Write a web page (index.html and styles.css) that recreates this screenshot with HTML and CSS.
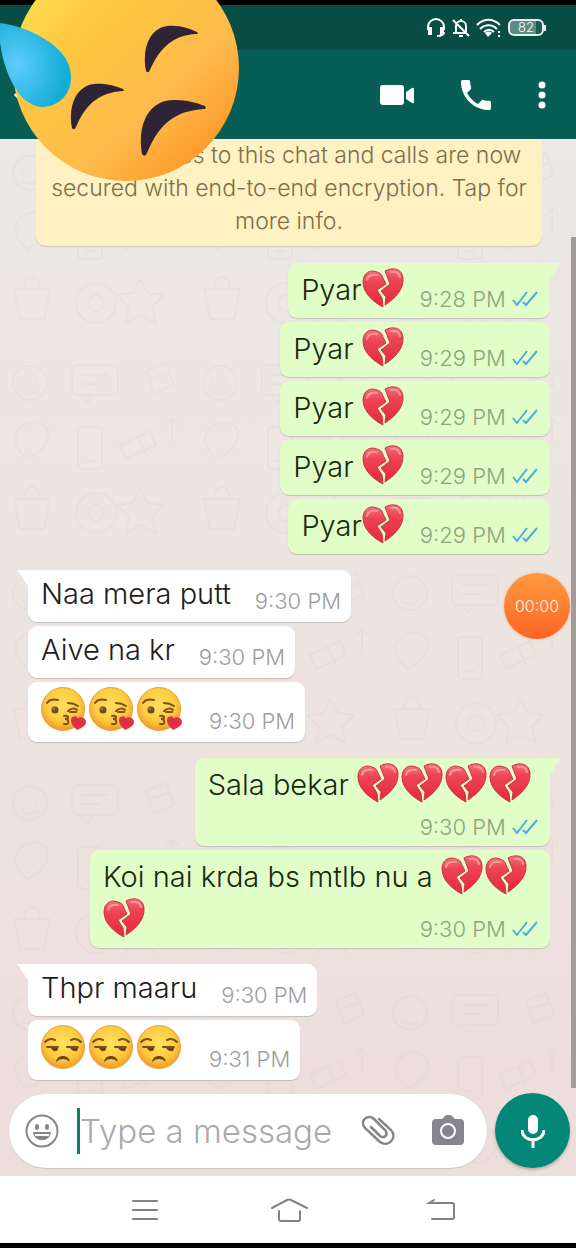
FILE: index.html
```html
<!DOCTYPE html>
<html lang="en">
<head>
  <meta charset="UTF-8" />
  <meta name="viewport" content="width=device-width, initial-scale=1.0" />
  <title>Chat</title>
  <link rel="stylesheet" href="styles.css">
</head>
<body>

  <!-- shared emoji and icons -->
  <svg class="sprite" width="0" height="0" aria-hidden="true">
    <defs>
      <linearGradient id="heartFill" x1="0" y1="0" x2="0" y2="1">
        <stop offset="0" stop-color="#f4717b" />
        <stop offset="0.3" stop-color="#ee4455" />
        <stop offset="1" stop-color="#e5283f" />
      </linearGradient>
      <radialGradient id="faceFill" cx="0.5" cy="0.4" r="0.6">
        <stop offset="0" stop-color="#ffe062" />
        <stop offset="0.65" stop-color="#fdca3d" />
        <stop offset="1" stop-color="#f0982b" />
      </radialGradient>
      <symbol id="broken-heart" viewBox="0 0 44 40">
        <g fill="url(#heartFill)" stroke="#cf3343" stroke-width="1" stroke-linejoin="round">
          <path d="M1 14C1 5 8 1 15 4c4 1 5 3 6 6l3 6-9 6 5 8 1 9C13 35 1 26 1 14z" />
          <path d="M23 3c7-4 17-3 18 7 1 12-9 21-18 27l1-8-5-6 9-7z" />
        </g>
        <path d="M5 12c1-5 6-6 10-5M29 4c5-1 8 1 9 5" fill="none" stroke="#f7969b" stroke-width="2" stroke-linecap="round" />
      </symbol>
      <symbol id="kiss" viewBox="0 0 48 46">
        <circle cx="22" cy="22" r="21.500" fill="url(#faceFill)" stroke="#eda035" />
        <g fill="none" stroke="#7b4f16" stroke-width="2" stroke-linecap="round">
          <path d="M6 16c2-3 6-4 11-3M27 16c4 0 7 1 10 3M27 24c3-3 7-3 9-1M29 25h6" />
          <path d="M23 29c3-1 5 1 4 2s-2 1-3 1c3 0 4 2 3 4s-3 1-4 1" />
        </g>
        <circle cx="14" cy="23" r="3.500" fill="#6d4a17" />
        <circle cx="13" cy="22" r="1" fill="#c9a04c" />
        <path d="M36 43c-3-3-6-6-6-10s5-5 7-2c3-2 8 0 8 4s-5 6-9 8z" fill="#e32f45" />
      </symbol>
      <symbol id="unamused" viewBox="0 0 48 46">
        <circle cx="22" cy="22" r="21.500" fill="url(#faceFill)" stroke="#eda035" />
        <path d="M10 22h7c1 6-7 5-7 0zM29 22h8c1 6-7 5-8 0z" fill="#66420f" />
        <g fill="none" stroke="#7b4f16" stroke-width="2" stroke-linecap="round">
          <path d="M4 17c3-3 6-4 10-2M30 15c4-2 7-1 10 2M6 22h11M26 22h11" />
        </g>
        <path d="M15 37c1-8 13-8 14 0-4-4-10-4-14 0z" fill="#66420f" />
      </symbol>
      <symbol id="ticks" viewBox="0 0 26 16">
        <path d="M1 9l4 5L15 1M11 11l3 3L25 1" fill="none" stroke="#4fabdd" stroke-width="2" />
      </symbol>
      <pattern id="doodles" width="190" height="210" patternUnits="userSpaceOnUse">
        <g fill="none" stroke="#cfc3bd" stroke-width="2" stroke-linecap="round" stroke-linejoin="round" opacity="0.17">
          <circle cx="30" cy="34" r="17" />
          <path d="M22 32v2M36 32v2M22 42c5 4 11 4 16 0" />
          <rect x="72" y="16" width="46" height="30" rx="5" />
          <path d="M80 46l8 8 4-8M82 26h26M82 35h18" />
          <path d="M146 22l20-8 8 22-20 8zM150 30l18-6" />
          <path d="M18 82c10-14 30-10 30 4s-20 24-20 24S8 96 18 82z" />
          <rect x="78" y="78" width="24" height="42" rx="4" />
          <path d="M86 112h8M120 96l30-14 6 14-30 14zM138 88l8 18" />
          <path d="M14 150h36l-6 30H20zM24 150c0-16 16-16 16 0" />
          <circle cx="96" cy="164" r="20" />
          <circle cx="96" cy="164" r="8" />
          <path d="M140 140l8 14 16 2-12 12 4 16-16-8-14 8 3-16-12-12 16-2zM172 70v22M166 76l6-6 6 6" />
        </g>
      </pattern>
    </defs>
  </svg>

  <div class="status-bar">
    <svg width="20" height="20" viewBox="0 0 20 20" fill="none" stroke="#fff" stroke-width="2">
      <path d="M2 12V9a8 8 0 0 1 16 0v3M18 14c0 3-3 4-7 4" />
      <path d="M3 10h2v6H3zM15 10h2v6h-2z" fill="#fff" />
    </svg>
    <svg width="18" height="20" viewBox="0 0 18 20" fill="none" stroke="#fff" stroke-width="2">
      <path d="M4 14V8a5 5 0 0 1 10 0v7M1 15h14M9 1v2M1 2l16 16M7 18h4" />
    </svg>
    <svg width="26" height="20" viewBox="0 0 26 20" fill="none" stroke="#fff" stroke-width="2">
      <path d="M1 7c7-7 16-7 23 0M4 11c5-5 12-5 17 0M8 14c3-3 7-3 10 0" />
      <path d="M9 15c2-2 5-2 7 0l-4 4zM22 13h2v2h-2zM22 17h2v2h-2z" fill="#fff" stroke="none" />
    </svg>
    <span class="battery">82</span>
  </div>

  <header class="navbar">
    <button type="button" class="back" aria-label="Back">
      <svg width="24" height="24" viewBox="0 0 24 24" fill="none" stroke="#fff" stroke-width="3"><path d="M23 12H4M13 3l-9 9 9 9" /></svg>
    </button>
    <div class="call-actions">
      <button type="button" aria-label="Video call">
        <svg width="34" height="22" viewBox="0 0 34 22" fill="#fff">
          <rect x="0" y="1" width="24" height="20" rx="3" />
          <path d="M26 8l6-4q2-1 2 1v13q0 2-2 1l-6-4z" />
        </svg>
      </button>
      <button type="button" aria-label="Voice call">
        <svg width="30" height="30" viewBox="3 3 18 18" fill="#fff">
          <path d="M6.620 10.790c1.440 2.830 3.760 5.140 6.590 6.590l2.200-2.200c.27-.27.67-.36 1.020-.24 1.120.37 2.330.57 3.570.57.550 0 1 .45 1 1V20c0 .55-.45 1-1 1-9.390 0-17-7.610-17-17 0-.55.450-1 1-1h3.500c.55 0 1 .45 1 1 0 1.250.2 2.450.57 3.570.11.350.03.740-.25 1.020l-2.200 2.200z" />
        </svg>
      </button>
      <button type="button" aria-label="More options">
        <svg width="8" height="28" viewBox="0 0 8 28" fill="#fff">
          <circle cx="4" cy="4" r="3.500" /><circle cx="4" cy="14" r="3.500" /><circle cx="4" cy="24" r="3.500" />
        </svg>
      </button>
    </div>
  </header>

  <main class="conversation">
    <svg class="wallpaper" aria-hidden="true"><rect width="100%" height="100%" fill="url(#doodles)" /></svg>

    <div class="chat">
      <p class="notice">
        <svg width="32" height="20" viewBox="0 0 32 20" fill="none" stroke="#7c6f4a" stroke-width="2"><rect x="8" y="9" width="14" height="10" rx="2" fill="#7c6f4a" /><path d="M11 9V5a4 4 0 0 1 8 0v4" /></svg>
        Messages to this chat and calls are now secured with end-to-end encryption. Tap for more info.
      </p>

      <div class="group sent">
        <div class="bubble">
          <p>Pyar<svg class="heart"><use href="#broken-heart" /></svg></p>
          <span class="meta">9:28 PM <svg class="ticks"><use href="#ticks" /></svg></span>
        </div>
        <div class="bubble">
          <p>Pyar <svg class="heart"><use href="#broken-heart" /></svg></p>
          <span class="meta">9:29 PM <svg class="ticks"><use href="#ticks" /></svg></span>
        </div>
        <div class="bubble">
          <p>Pyar <svg class="heart"><use href="#broken-heart" /></svg></p>
          <span class="meta">9:29 PM <svg class="ticks"><use href="#ticks" /></svg></span>
        </div>
        <div class="bubble">
          <p>Pyar <svg class="heart"><use href="#broken-heart" /></svg></p>
          <span class="meta">9:29 PM <svg class="ticks"><use href="#ticks" /></svg></span>
        </div>
        <div class="bubble">
          <p>Pyar<svg class="heart"><use href="#broken-heart" /></svg></p>
          <span class="meta">9:29 PM <svg class="ticks"><use href="#ticks" /></svg></span>
        </div>
      </div>

      <div class="group received">
        <div class="bubble"><p>Naa mera putt</p><span class="meta">9:30 PM</span></div>
        <div class="bubble"><p>Aive na kr</p><span class="meta">9:30 PM</span></div>
        <div class="bubble">
          <p class="faces"><svg><use href="#kiss" /></svg><svg><use href="#kiss" /></svg><svg><use href="#kiss" /></svg></p>
          <span class="meta">9:30 PM</span>
        </div>
      </div>

      <div class="group sent">
        <div class="bubble stacked">
          <p>Sala bekar <svg class="heart"><use href="#broken-heart" /></svg><svg class="heart"><use href="#broken-heart" /></svg><svg class="heart"><use href="#broken-heart" /></svg><svg class="heart"><use href="#broken-heart" /></svg></p>
          <span class="meta">9:30 PM <svg class="ticks"><use href="#ticks" /></svg></span>
        </div>
        <div class="bubble stacked tucked">
          <p>Koi nai krda bs mtlb nu a <svg class="heart"><use href="#broken-heart" /></svg><svg class="heart"><use href="#broken-heart" /></svg><svg class="heart"><use href="#broken-heart" /></svg></p>
          <span class="meta">9:30 PM <svg class="ticks"><use href="#ticks" /></svg></span>
        </div>
      </div>

      <div class="group received">
        <div class="bubble"><p>Thpr maaru</p><span class="meta">9:30 PM</span></div>
        <div class="bubble">
          <p class="faces"><svg><use href="#unamused" /></svg><svg><use href="#unamused" /></svg><svg><use href="#unamused" /></svg></p>
          <span class="meta">9:31 PM</span>
        </div>
      </div>

      <div class="scrollbar"></div>
      <div class="recorder">00:00</div>
    </div>

    <form class="composer">
      <div class="field">
        <button type="button" aria-label="Emoji">
          <svg width="34" height="34" viewBox="0 0 34 34" fill="#85858a">
            <circle cx="17" cy="17" r="15.500" fill="none" stroke="#85858a" stroke-width="2" />
            <ellipse cx="12" cy="13" rx="2" ry="3" /><ellipse cx="22" cy="13" rx="2" ry="3" />
            <path d="M8 18h18c-1 11-17 11-18 0z" />
            <path d="M10 20h14v2H10z" fill="#fff" />
          </svg>
        </button>
        <input type="text" placeholder="Type a message" aria-label="Type a message" />
        <button type="button" aria-label="Attach">
          <svg width="34" height="32" viewBox="0 0 34 32" fill="none" stroke="#85858a" stroke-width="2.500" stroke-linecap="round">
            <path d="M18 4l12 11c7 8-3 18-11 12L4 13C-2 6 7-2 13 4l11 11c4 5-1 9-5 6L10 12" />
          </svg>
        </button>
        <button type="button" aria-label="Camera">
          <svg width="32" height="32" viewBox="0 0 32 32" fill="#85858d">
            <path d="M4 4h6l3-3q1-1 2-1h3q1 0 2 1l3 3h5q4 0 4 4v18q0 4-4 4H4q-4 0-4-4V8q0-4 4-4z" />
            <circle cx="16" cy="16" r="7" fill="none" stroke="#fff" stroke-width="2" />
          </svg>
        </button>
      </div>
      <button type="button" class="mic" aria-label="Record voice message">
        <svg width="24" height="34" viewBox="0 0 24 34" fill="none" stroke="#fff" stroke-width="3">
          <rect x="8" y="2" width="8" height="17" rx="4" fill="#fff" stroke-width="2" />
          <path d="M1 16c0 13 22 13 22 0M12 25v9" />
        </svg>
      </button>
    </form>
  </main>

  <nav class="system-nav">
    <button type="button" aria-label="Recent apps">
      <svg width="54" height="28" viewBox="0 0 54 28"><path d="M15 5h24M15 14h24M15 23h24" /></svg>
    </button>
    <button type="button" aria-label="Home">
      <svg width="54" height="28" viewBox="0 0 54 28"><path d="M8 12l15-8q2-1 4 0l16 8M15 15v8q0 2 2 2h17q2 0 2-2v-8" /></svg>
    </button>
    <button type="button" aria-label="Back">
      <svg width="54" height="28" viewBox="0 0 54 28"><path d="M24 4l-5 3h23q2 0 2 2v12q0 2-2 2H22" /></svg>
    </button>
  </nav>

  <!-- sticker laid over the contact name -->
  <svg class="sticker" width="240" height="182" viewBox="0 0 240 182" aria-hidden="true">
    <defs>
      <linearGradient id="stickerFace" x1="0.1" y1="0.1" x2="0.85" y2="0.9">
        <stop offset="0" stop-color="#ffe052" />
        <stop offset="0.3" stop-color="#fec63f" />
        <stop offset="0.7" stop-color="#fdbb4c" />
        <stop offset="1" stop-color="#ff9a2a" />
      </linearGradient>
      <radialGradient id="stickerDrop" cx="0.25" cy="0.5" r="0.7">
        <stop offset="0" stop-color="#5fcbfb" />
        <stop offset="1" stop-color="#12add6" />
      </radialGradient>
    </defs>
    <circle cx="126" cy="68" r="113" fill="url(#stickerFace)" />
    <path d="M-1 23C22 25 71 44 71 77c0 20-15 30-30 30C15 105-2 60-1 23z" fill="url(#stickerDrop)" />
    <g fill="#2f2336">
      <path d="M146 71c-4-22 3-43 22-45 12-1 22 3 29 6q2 2-1 2c-22 1-36 13-46 36q-2 4-4 1z" />
      <path d="M72 128c-4-22 4-42 22-44 12-1 21 2 29 5q2 2-1 2c-22 2-35 11-46 36q-2 4-4 1z" />
      <path d="M142 154c-4-25 3-47 23-53 14-3 30 1 40 5q2 3-1 3c-28 2-44 13-57 44q-2 5-5 1z" />
    </g>
  </svg>

</body>
</html>
```

FILE: styles.css
```css
* {
  box-sizing: border-box;
}
body {
  margin: 0;
  min-height: 100vh;
  display: flex;
  flex-direction: column;
  position: relative;
  background: #fff;
  font-family: Inter, 'Liberation Sans', sans-serif;
  font-weight: 300;
}
button {
  display: flex;
  align-items: center;
  justify-content: center;
  padding: 0;
  border: none;
  background: none;
  cursor: pointer;
}
p {
  margin: 0;
}
.sprite {
  position: absolute;
}

.status-bar {
  height: 50px;
  display: flex;
  align-items: center;
  justify-content: flex-end;
  gap: 6px;
  padding: 0 32px 0 0;
  border-top: 5px solid #000;
  background: #074d44;
}
.battery {
  position: relative;
  width: 36px;
  height: 17px;
  border: 2px solid #e4f0ee;
  border-radius: 6px;
  background: linear-gradient(90deg, #5f8a84 80%, #1c5a52 80%);
  color: #fff;
  font-size: 13px;
  line-height: 13px;
  text-align: center;
}
.battery::after {
  content: "";
  position: absolute;
  top: 4px;
  right: -4px;
  width: 2px;
  height: 6px;
  background: #e4f0ee;
}

.navbar {
  height: 89px;
  display: flex;
  align-items: center;
  justify-content: space-between;
  padding: 0 30px 0 12px;
  background: #075e54;
}
.call-actions {
  display: flex;
  align-items: center;
  gap: 47px;
}

.conversation {
  flex: 1;
  display: flex;
  flex-direction: column;
  position: relative;
  background: linear-gradient(#ebe8e7, #ede4df 45%, #eee0de 80%, #eddddc);
}
.wallpaper {
  position: absolute;
  width: 100%;
  height: 100%;
}

.chat {
  flex: 1;
  position: relative;
  display: flex;
  flex-direction: column;
  gap: 16px;
  padding: 0 26px 0 28px;
}
.notice {
  margin: 0 8px 1px;
  padding: 0 10px 8px;
  border-radius: 0 0 10px 10px;
  background: #fef1c2;
  box-shadow: 0 1px 1px #cfc6b8;
  color: #7c6f4a;
  font-size: 23px;
  line-height: 33px;
  text-align: center;
}

.group {
  display: flex;
  flex-direction: column;
  gap: 4px;
}
.sent {
  align-items: flex-end;
}
.received {
  align-items: flex-start;
}
.bubble {
  position: relative;
  display: flex;
  align-items: flex-end;
  gap: 24px;
  max-width: 460px;
  padding: 5px 10px 9px 13px;
  border-radius: 9px;
  background: #fff;
  box-shadow: 0 1px 1px #c6beba;
  color: #1d1d20;
  font-size: 29px;
  line-height: 38px;
}
.sent .bubble {
  gap: 14px;
  padding: 5px 12px 7px 13px;
  background: #e1fec8;
  color: #17290f;
  line-height: 43px;
}

/* tail on the first bubble of a group */
.bubble:first-child::before {
  content: "";
  position: absolute;
  top: 0;
  width: 18px;
  height: 16px;
}
.sent .bubble:first-child::before {
  right: -11px;
  background: #e1fec8;
  clip-path: polygon(0 0, 100% 0, 7px 100%, 0 100%);
}
.received .bubble:first-child::before {
  left: -11px;
  background: #fff;
  clip-path: polygon(0 0, 100% 0, 100% 100%, 11px 100%);
}

.heart {
  width: 44px;
  height: 40px;
  vertical-align: -8px;
}
.sent p {
  min-height: 43px;
}
.faces {
  display: flex;
}
.faces svg {
  width: 48px;
  height: 46px;
}
.meta {
  color: #9c9ca0;
  font-size: 22px;
  line-height: 24px;
  white-space: nowrap;
}
.sent .meta {
  color: #8ea27f;
}
.ticks {
  width: 26px;
  height: 16px;
}
.sent .stacked {
  flex-direction: column;
  gap: 9px;
}
.stacked p {
  padding-right: 5px;
}
.sent .tucked {
  gap: 0;
}
.tucked .meta {
  margin-top: -24px;
}

.scrollbar {
  position: absolute;
  top: 98px;
  right: 0;
  bottom: 0;
  width: 5px;
  background: #a29b99;
}
.recorder {
  position: absolute;
  top: 434px;
  right: 6px;
  width: 66px;
  height: 66px;
  border-radius: 50%;
  background: linear-gradient(#ff9a3e, #fb6526);
  box-shadow: 0 0 3px #f5b48f;
  color: #fff3e6;
  font-size: 16px;
  line-height: 66px;
  text-align: center;
}

.composer {
  position: relative;
  display: flex;
  align-items: center;
  gap: 8px;
  padding: 5px 6px 8px 9px;
}
.field {
  flex: 1;
  min-width: 0;
  height: 74px;
  display: flex;
  align-items: center;
  padding: 0 23px 0 16px;
  border-radius: 37px;
  background: #fff;
  box-shadow: 0 1px 1px #cfc5c3;
}
.field input {
  flex: 1;
  min-width: 0;
  height: 46px;
  margin: 0 16px 0 18px;
  padding: 0;
  border: none;
  border-left: 3px solid #0a806b;
  outline: none;
  background: none;
  color: #1d1d20;
  font-family: inherit;
  font-size: 33px;
  font-weight: 300;
}
.field input::placeholder {
  color: #aaa;
}
.field button + button {
  margin-left: 37px;
}
.mic {
  width: 75px;
  height: 75px;
  border-radius: 50%;
  background: #048777;
  box-shadow: 0 2px 3px #b9adab;
}

.system-nav {
  height: 72px;
  display: flex;
  align-items: center;
  justify-content: space-between;
  padding: 0 112px 0 118px;
  border-bottom: 5px solid #000;
  background: #fff;
}
.system-nav svg {
  fill: none;
  stroke: #828285;
  stroke-width: 2;
  stroke-linecap: round;
}

.sticker {
  position: absolute;
  top: 0;
  left: 0;
  pointer-events: none;
}
```
